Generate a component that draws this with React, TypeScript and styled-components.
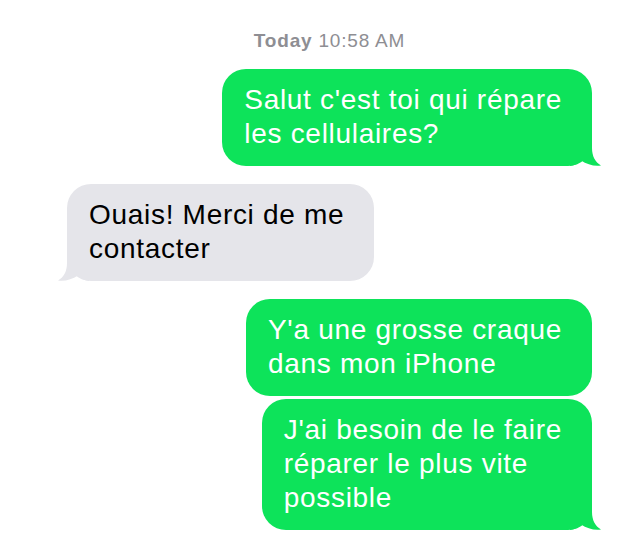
import React from "react";
import styled, { createGlobalStyle } from "styled-components";

const GREEN = "#0de35a";
const GRAY = "#e5e5ea";

type Side = "left" | "right";

const messages: { side: Side; lines: string[]; tail: boolean; gap: number }[] = [
  { side: "right", lines: ["Salut c'est toi qui répare", "les cellulaires?"], tail: true, gap: 0 },
  { side: "left", lines: ["Ouais! Merci de me", "contacter"], tail: true, gap: 18 },
  { side: "right", lines: ["Y'a une grosse craque", "dans mon iPhone"], tail: false, gap: 18 },
  {
    side: "right",
    lines: ["J'ai besoin de le faire", "réparer le plus vite", "possible"],
    tail: true,
    gap: 3,
  },
];

const App = () => {
  return (
    <>
      <GlobalStyle />
      <Thread>
        <Timestamp>
          <strong>Today</strong> 10:58 AM
        </Timestamp>
        {messages.map((m, i) => (
          <Row key={i} $side={m.side} $gap={m.gap}>
            <Bubble $side={m.side}>
              {m.lines.map((line, j) => (
                <Line key={j}>{line}</Line>
              ))}
              {m.tail && <Tail side={m.side} />}
            </Bubble>
          </Row>
        ))}
      </Thread>
    </>
  );
};

const Tail = ({ side }: { side: Side }) => (
  <TailSvg $side={side} width="32" height="28" viewBox="0 0 32 28">
    <path
      d="M0 0H22V10C22 18 25 24 31 27.5C24 28.5 17 26.5 11 22.5C8 25.5 5 27.5 0 28Z"
      fill={side === "right" ? GREEN : GRAY}
    />
  </TailSvg>
);

const GlobalStyle = createGlobalStyle`
  html, body {
    margin: 0;
    padding: 0;
    background: #ffffff;
  }
  body {
    font-family: "Liberation Sans", Arial, sans-serif;
    -webkit-font-smoothing: antialiased;
  }
`;

const Thread = styled.div`
  width: 640px;
  height: 544px;
  box-sizing: border-box;
  padding: 30px 48px 0 67px;
  display: flex;
  flex-direction: column;
  overflow: hidden;
`;

const Timestamp = styled.div`
  text-align: center;
  font-size: 19px;
  line-height: 22px;
  letter-spacing: 0.8px;
  color: #8e8e93;
  margin-bottom: 17px;

  strong {
    font-weight: 700;
  }
`;

const Row = styled.div<{ $side: Side; $gap: number }>`
  display: flex;
  justify-content: ${(p) => (p.$side === "right" ? "flex-end" : "flex-start")};
  margin-top: ${(p) => p.$gap}px;
`;

const Bubble = styled.div<{ $side: Side }>`
  position: relative;
  background: ${(p) => (p.$side === "right" ? GREEN : GRAY)};
  color: ${(p) => (p.$side === "right" ? "#ffffff" : "#000000")};
  border-radius: 24px;
  padding: 14px 30px 15px 22px;
  font-size: 28px;
  line-height: 34px;
  letter-spacing: 0.7px;
`;

const Line = styled.div`
  white-space: nowrap;
  position: relative;
  z-index: 1;
`;

const TailSvg = styled.svg<{ $side: Side }>`
  position: absolute;
  bottom: 0;
  ${(p) => (p.$side === "right" ? "right: -10px;" : "left: -10px; transform: scaleX(-1);")}
`;

export default App;
